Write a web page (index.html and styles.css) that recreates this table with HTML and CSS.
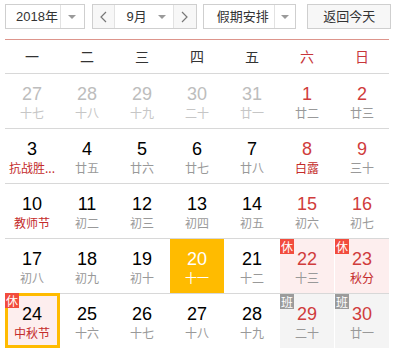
FILE: index.html
```html
<!DOCTYPE html>
<html lang="zh-CN">
<head>
<meta charset="utf-8">
<title>万年历</title>
<link rel="stylesheet" href="styles.css">
</head>
<body>
<div class="cal">
  <div class="toolbar">
    <div class="select year"><span class="label">2018年</span><span class="drop"><i class="tri"></i></span></div>
    <div class="month-group">
      <button class="nav"><svg width="7" height="12" viewBox="0 0 7 12"><polyline points="6,1 1,6 6,11" fill="none" stroke="#777" stroke-width="1.2"/></svg></button>
      <div class="select month"><span class="label">9月</span><span class="drop"><i class="tri"></i></span></div>
      <button class="nav"><svg width="7" height="12" viewBox="0 0 7 12"><polyline points="1,1 6,6 1,11" fill="none" stroke="#777" stroke-width="1.2"/></svg></button>
    </div>
    <div class="select holiday"><span class="label">假期安排</span><span class="drop"><i class="tri"></i></span></div>
    <button class="today-btn">返回今天</button>
  </div>

  <div class="weekdays">
    <span>一</span><span>二</span><span>三</span><span>四</span><span>五</span><span class="we">六</span><span class="we">日</span>
  </div>

  <div class="week">
    <div class="day other"><span class="num">27</span><span class="lunar">十七</span></div>
    <div class="day other"><span class="num">28</span><span class="lunar">十八</span></div>
    <div class="day other"><span class="num">29</span><span class="lunar">十九</span></div>
    <div class="day other"><span class="num">30</span><span class="lunar">二十</span></div>
    <div class="day other"><span class="num">31</span><span class="lunar">廿一</span></div>
    <div class="day weekend"><span class="num">1</span><span class="lunar">廿二</span></div>
    <div class="day weekend"><span class="num">2</span><span class="lunar">廿三</span></div>
  </div>
  <div class="week">
    <div class="day"><span class="num">3</span><span class="lunar fest">抗战胜...</span></div>
    <div class="day"><span class="num">4</span><span class="lunar">廿五</span></div>
    <div class="day"><span class="num">5</span><span class="lunar">廿六</span></div>
    <div class="day"><span class="num">6</span><span class="lunar">廿七</span></div>
    <div class="day"><span class="num">7</span><span class="lunar">廿八</span></div>
    <div class="day weekend"><span class="num">8</span><span class="lunar fest">白露</span></div>
    <div class="day weekend"><span class="num">9</span><span class="lunar">三十</span></div>
  </div>
  <div class="week">
    <div class="day"><span class="num">10</span><span class="lunar fest">教师节</span></div>
    <div class="day"><span class="num">11</span><span class="lunar">初二</span></div>
    <div class="day"><span class="num">12</span><span class="lunar">初三</span></div>
    <div class="day"><span class="num">13</span><span class="lunar">初四</span></div>
    <div class="day"><span class="num">14</span><span class="lunar">初五</span></div>
    <div class="day weekend"><span class="num">15</span><span class="lunar">初六</span></div>
    <div class="day weekend"><span class="num">16</span><span class="lunar">初七</span></div>
  </div>
  <div class="week">
    <div class="day"><span class="num">17</span><span class="lunar">初八</span></div>
    <div class="day"><span class="num">18</span><span class="lunar">初九</span></div>
    <div class="day"><span class="num">19</span><span class="lunar">初十</span></div>
    <div class="day today"><span class="num">20</span><span class="lunar">十一</span></div>
    <div class="day"><span class="num">21</span><span class="lunar">十二</span></div>
    <div class="day rest weekend"><span class="badge">休</span><span class="num">22</span><span class="lunar">十三</span></div>
    <div class="day rest weekend"><span class="badge">休</span><span class="num">23</span><span class="lunar fest">秋分</span></div>
  </div>
  <div class="week last">
    <div class="day rest selected"><span class="badge">休</span><span class="num">24</span><span class="lunar fest">中秋节</span></div>
    <div class="day"><span class="num">25</span><span class="lunar">十六</span></div>
    <div class="day"><span class="num">26</span><span class="lunar">十七</span></div>
    <div class="day"><span class="num">27</span><span class="lunar">十八</span></div>
    <div class="day"><span class="num">28</span><span class="lunar">十九</span></div>
    <div class="day work weekend"><span class="badge gray">班</span><span class="num">29</span><span class="lunar">二十</span></div>
    <div class="day work weekend"><span class="badge gray">班</span><span class="num">30</span><span class="lunar">廿一</span></div>
  </div>
</div>
</body>
</html>
```

FILE: styles.css
```css
* { box-sizing: border-box; }

body {
  margin: 0;
  background: #fff;
  font-family: "Liberation Sans", "Noto Sans CJK SC", sans-serif;
  color: #333;
}

.cal {
  padding: 4px 5px 0;
}

/* toolbar */
.toolbar {
  display: flex;
  align-items: stretch;
  height: 25px;
  margin-bottom: 10px;
}

.select {
  display: flex;
  border: 1px solid #cfcfcf;
  background: #fff;
  height: 25px;
  font-size: 13px;
  line-height: 23px;
  color: #333;
}

.select .label {
  flex: 1;
  padding-left: 10px;
  white-space: nowrap;
}

.select .drop {
  display: flex;
  align-items: center;
  justify-content: center;
  border-left: 1px solid #e2e2e2;
}

.tri {
  display: block;
  width: 0;
  height: 0;
  border-left: 4px solid transparent;
  border-right: 4px solid transparent;
  border-top: 4px solid #9a9a9a;
}

.year { width: 80px; }
.year .drop { width: 24px; }

.month-group {
  display: flex;
  margin-left: 7px;
  width: 105px;
  height: 25px;
  border: 1px solid #cfcfcf;
}

.nav {
  width: 22px;
  padding: 0;
  border: 0;
  background: #f7f7f7;
  display: flex;
  align-items: center;
  justify-content: center;
}

.month {
  border: 0;
  border-left: 1px solid #e2e2e2;
  border-right: 1px solid #e2e2e2;
  height: 23px;
  width: 60px;
}
.month .label { padding-left: 11px; }
.month .drop { border-left: 0; width: 22px; }

.holiday {
  margin-left: 6px;
  width: 94px;
}
.holiday .label { padding-left: 13px; }
.holiday .drop { width: 21px; }

.today-btn {
  margin-left: 11px;
  width: 84px;
  height: 25px;
  padding: 0;
  border: 1px solid #cfcfcf;
  background: #f7f7f7;
  font-family: "Liberation Sans", "Noto Sans CJK SC", sans-serif;
  font-size: 13px;
  line-height: 23px;
  color: #333;
}

/* weekday header */
.weekdays {
  display: grid;
  grid-template-columns: repeat(7, 54px);
  column-gap: 1px;
  width: 384px;
  border-top: 1px solid #dd958c;
  height: 34px;
}

.weekdays span {
  text-align: center;
  font-family: "Noto Sans CJK SC", sans-serif;
  font-size: 14px;
  line-height: 33px;
  color: #333;
}

.weekdays .we { color: #c8363a; }

/* weeks */
.week {
  display: grid;
  grid-template-columns: repeat(7, 54px);
  column-gap: 1px;
  width: 384px;
  border-top: 1px solid #d8d8d8;
}

.day {
  position: relative;
  height: 54px;
  padding-top: 11px;
  display: flex;
  flex-direction: column;
  align-items: center;
}

.num {
  font-family: "Liberation Sans", sans-serif;
  font-size: 18px;
  line-height: 18px;
  color: #000;
}

.lunar {
  margin-top: 3px;
  font-family: "Noto Sans CJK SC", sans-serif;
  font-size: 12px;
  line-height: 14px;
  color: #999;
  white-space: nowrap;
}

.lunar.fest { color: #c42b2b; }

.weekend .num { color: #d03c3c; }

.other .num { color: #bdbdbd; }
.other .lunar { color: #c6c6c6; }

.today { background: #ffbb00; }
.today .num,
.today .lunar { color: #fff; }

.rest { background: #fdeeee; }
.work { background: #f4f4f4; }

.selected::after {
  content: "";
  position: absolute;
  top: -1px;
  left: 0;
  right: -1px;
  bottom: 0;
  border: 3px solid #ffbb00;
}

.badge {
  position: absolute;
  top: 0;
  left: 0;
  z-index: 1;
  width: 14px;
  height: 15px;
  background: #f24c3d;
  color: #fff;
  font-family: "Noto Sans CJK SC", sans-serif;
  font-size: 12px;
  line-height: 15px;
  text-align: center;
}

.selected .badge { top: -1px; }

.badge.gray { background: #9b9b9b; }
```
